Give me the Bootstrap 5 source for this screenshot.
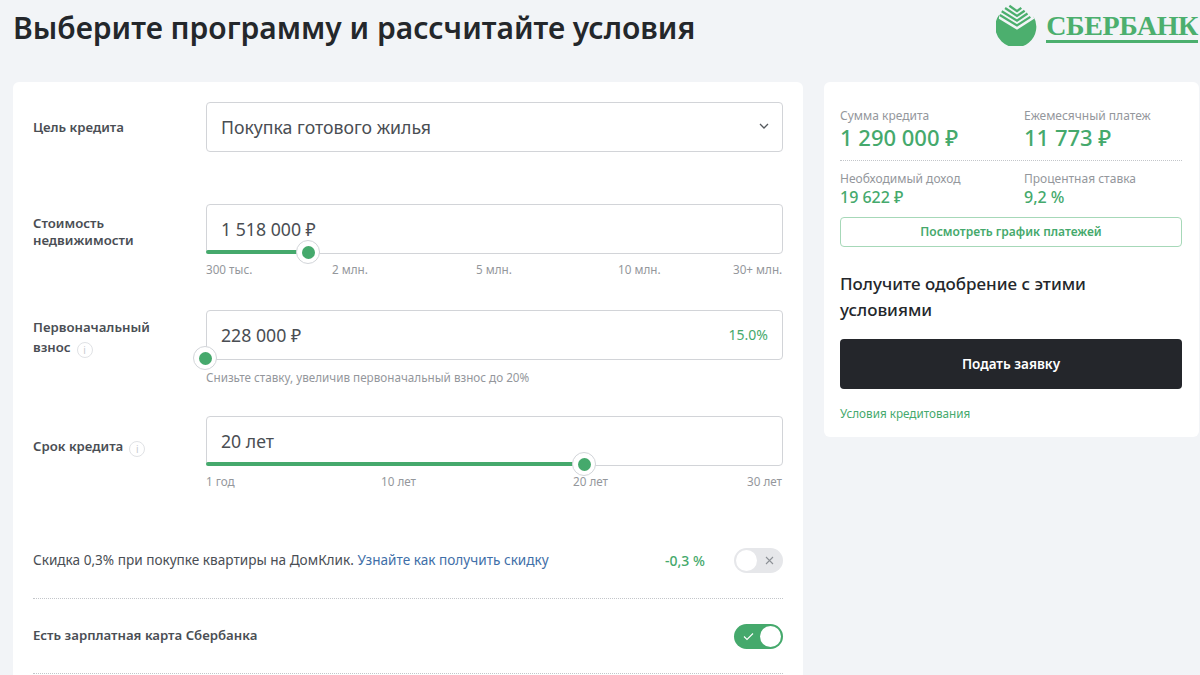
<!DOCTYPE html>
<html lang="ru"><head><meta charset="utf-8"><title>Ипотека</title>
<link href="https://cdn.jsdelivr.net/npm/bootstrap@5.3.0/dist/css/bootstrap.min.css" rel="stylesheet">
<style>
html,body{height:675px;overflow:hidden}
body{background:#f2f4f7;font-family:"Noto Sans","Open Sans",sans-serif;color:#2d3035}
.shell{padding:0 0 0 13px;width:1200px}
.headbar{height:82px}
.page-title{font-size:30px;font-weight:600;margin:0;padding-top:8px;line-height:40px;color:#24272b}
.brand-name{font-family:"Liberation Serif",serif;font-weight:700;font-size:28px;line-height:27px;color:#4caf6e;border-bottom:3px solid #4caf6e;padding-bottom:1px;letter-spacing:-.4px;margin-top:8px}
.brand{margin-top:4px;margin-right:2px}
.left-panel{width:790px;background:#fff;border-radius:6px 6px 0 0;padding:20px 20px 0;height:593px;flex:none}
.right-panel{width:375px;height:355px;background:#fff;border-radius:6px;margin-left:21px;padding:26px 16px 0;flex:none}
.lbl{width:173px;flex:none;font-size:13.2px;font-weight:600;line-height:17px;color:#4a4e54}
.lbl-tall{line-height:20px;padding-top:7px}
.lbl-one{padding-top:22px}
.lbl-two{padding-top:11px}
.fld{width:577px;height:50px;border:1px solid #d2d4d8;border-radius:4px;font-size:17.7px;line-height:48px;padding:0 14px;color:#4a4e53;position:relative;background:#fff}
.track{position:absolute;left:-1px;bottom:-1px;height:4px;background:#45a96c;border-radius:2px 0 0 2px}
.thumb{position:absolute;width:24px;height:24px;border-radius:50%;background:#fff;border:1px solid #d2d5d9;display:flex;align-items:center;justify-content:center}
.thumb::after{content:"";width:13px;height:13px;border-radius:50%;background:#45a96c}
.sel-arrow{position:absolute;right:13px;top:20px}
.ticks{width:577px;font-size:11.7px;color:#94979c;line-height:16px;margin-top:7px}
.ticks span{flex:none}
.hint{font-size:11.7px;color:#94979c;line-height:16px;margin-top:9px}
.info{display:inline-flex;width:16px;height:16px;border-radius:50%;border:1px solid #e0e2e5;color:#c9cbcf;font-size:10px;line-height:14px;justify-content:center;margin-left:6px;font-weight:400;vertical-align:-2px}
.opt-row{width:750px;height:75px;font-size:13.6px;color:#4a4e54;border-bottom:1px dotted #c3c6ca}
.opt-first{margin-top:35px;padding-bottom:1px}
.opt-strong{font-size:13.2px;font-weight:600}
.opt-a{color:#3f6fa8;text-decoration:none}
.pct{color:#45a96c;font-size:14px;font-weight:500;width:69px}
.pct-plain{font-weight:400;text-align:right;line-height:48px}
.tg{width:49px;height:25px;border-radius:13px;position:relative;flex:none}
.tg-off{background:#e6e7ea}
.tg-on{background:#45a96c}
.knob{position:absolute;top:2px;width:21px;height:21px;border-radius:50%;background:#fff}
.tg-off .knob{left:2px}
.tg-on .knob{right:2px}
.tg svg{position:absolute;top:8px}
.tg-off svg{right:9px}
.tg-on svg{left:9px}
.cap{font-size:12px;color:#94979c;line-height:16px}
.big{font-size:22px;font-weight:500;color:#45a96c;line-height:26px}
.mid{font-size:16px;font-weight:500;color:#45a96c;line-height:20px}
.stat-col{width:184px;flex:none}
.sep{border-bottom:1px dotted #c3c6ca;width:342px;margin:10px 0}
.sched{width:342px;height:30px;border:1px solid #a6d8b8;border-radius:4px;font-size:12px;font-weight:600;color:#45a96c;line-height:28px;text-align:center;margin-top:10px}
.appr{font-size:17px;font-weight:500;line-height:26px;margin:24px 0 0;color:#24272b;width:300px}
.send{width:342px;height:50px;background:#24262b;color:#fff;border-radius:4px;font-size:13.5px;font-weight:600;border:0;margin-top:16px}
.send:hover{background:#24262b;color:#fff}
.terms{font-size:11.7px;color:#45a96c;text-decoration:none;display:block;margin-top:16px;line-height:16px}
.row-a{margin-top:52px}
.row-b{margin-top:33px}
.row-c{margin-top:31px}
</style></head>
<body>
<div class="shell">
 <div class="headbar d-flex justify-content-between align-items-start">
  <h1 class="page-title">Выберите программу и рассчитайте условия</h1>
  <div class="brand d-flex align-items-start gap-2">
   <svg width="42" height="42" viewBox="0 0 44 44" aria-hidden="true">
    <path d="M39 12.5 A21.5 21.5 0 1 1 3.5 11 L3 15.5 L22 27 L40 15.5 Z" fill="#4caf6e"/>
    <g fill="none" stroke="#4caf6e" stroke-width="2.4">
     <path d="M4 11.5 L22 22.5 L36 13.5"/>
     <path d="M6 7.5 L22 17.5 L33 10"/>
     <path d="M9.5 4.2 L22 12.5 L30 7"/>
     <path d="M14 1.8 L22 7.5 L26.5 4"/>
    </g>
   </svg>
   <div class="brand-name">СБЕРБАНК</div>
  </div>
 </div>
 <div class="d-flex align-items-start">
  <div class="left-panel">
   <div class="d-flex align-items-center">
    <div class="lbl">Цель кредита</div>
    <div class="fld">Покупка готового жилья
     <svg class="sel-arrow" width="10" height="7" viewBox="0 0 10 7"><path d="M1 1l4 4 4-4" fill="none" stroke="#55595e" stroke-width="1.3"/></svg>
    </div>
   </div>
   <div class="d-flex row-a">
    <div class="lbl lbl-two">Стоимость<br>недвижимости</div>
    <div>
     <div class="fld">1 518 000 ₽
      <div class="track" style="width:102px"></div>
      <div class="thumb" style="left:89px;top:35px"></div>
     </div>
     <div class="ticks d-flex"><span style="width:126px">300 тыс.</span><span style="width:144px">2 млн.</span><span style="width:142px">5 млн.</span><span style="width:115px">10 млн.</span><span>30+ млн.</span></div>
    </div>
   </div>
   <div class="d-flex row-b">
    <div class="lbl lbl-tall">Первоначальный<br>взнос<span class="info">i</span></div>
    <div>
     <div class="fld d-flex justify-content-between">228 000 ₽<span class="pct pct-plain">15.0%</span>
      <div class="thumb" style="left:-14px;top:35px"></div>
     </div>
     <div class="hint">Снизьте ставку, увеличив первоначальный взнос до 20%</div>
    </div>
   </div>
   <div class="d-flex row-c">
    <div class="lbl lbl-one">Срок кредита<span class="info">i</span></div>
    <div>
     <div class="fld">20 лет
      <div class="track" style="width:378px"></div>
      <div class="thumb" style="left:365px;top:35px"></div>
     </div>
     <div class="ticks d-flex"><span style="width:175px">1 год</span><span style="width:192px">10 лет</span><span style="width:174px">20 лет</span><span>30 лет</span></div>
    </div>
   </div>
   <div class="opt-row opt-first d-flex align-items-center">
    <div class="flex-grow-1">Скидка 0,3% при покупке квартиры на ДомКлик. <a class="opt-a" href="#">Узнайте как получить скидку</a></div>
    <div class="pct">-0,3 %</div>
    <div class="tg tg-off"><span class="knob"></span>
     <svg width="9" height="9" viewBox="0 0 9 9"><path d="M1 1l7 7M8 1l-7 7" stroke="#8d9196" stroke-width="1.1"/></svg>
    </div>
   </div>
   <div class="opt-row d-flex align-items-center">
    <div class="flex-grow-1 opt-strong">Есть зарплатная карта Сбербанка</div>
    <div class="tg tg-on"><span class="knob"></span>
     <svg width="11" height="9" viewBox="0 0 11 9"><path d="M1 4.5l3 3 6-6" fill="none" stroke="#fff" stroke-width="1.1"/></svg>
    </div>
   </div>
  </div>
  <div class="right-panel">
   <div class="d-flex">
    <div class="stat-col"><div class="cap">Сумма кредита</div><div class="big">1 290 000 ₽</div></div>
    <div class="stat-col"><div class="cap">Ежемесячный платеж</div><div class="big">11 773 ₽</div></div>
   </div>
   <div class="sep"></div>
   <div class="d-flex">
    <div class="stat-col"><div class="cap">Необходимый доход</div><div class="mid">19 622 ₽</div></div>
    <div class="stat-col"><div class="cap">Процентная ставка</div><div class="mid">9,2 %</div></div>
   </div>
   <div class="sched">Посмотреть график платежей</div>
   <p class="appr">Получите одобрение с этими условиями</p>
   <button class="btn send d-block p-0">Подать заявку</button>
   <a class="terms" href="#">Условия кредитования</a>
  </div>
 </div>
</div>
</body></html>
